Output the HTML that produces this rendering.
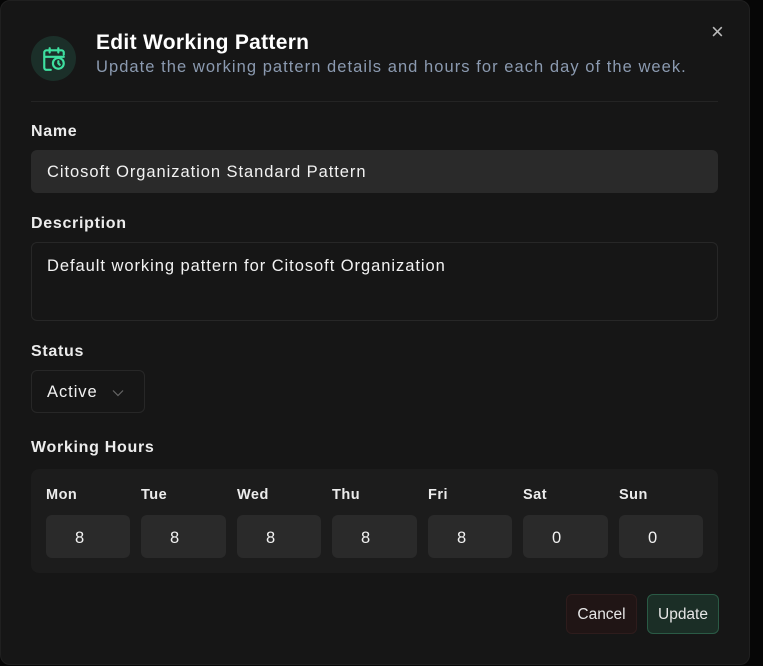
<!DOCTYPE html>
<html><head><style>
*{box-sizing:border-box;margin:0;padding:0}
body{width:763px;height:666px;background:#060606;font-family:"Liberation Sans",sans-serif;color:#f2f2f2;position:relative;overflow:hidden}
.dlg{position:absolute;left:0;top:0;width:750px;height:665px;background:#161616;border:1px solid #202020;border-radius:10px}
.a{position:absolute}
.lbl{font-size:16px;font-weight:bold;color:#ececec;letter-spacing:0.7px}
.in{background:#2a2a2a;border-radius:6px}
.t{font-size:16.5px;letter-spacing:0.95px}
.d{font-size:14.5px;letter-spacing:0.5px}
</style></head><body>
<div class="dlg"></div>
<div class="a" style="left:31px;top:36px;width:45px;height:45px;border-radius:50%;background:#1b2f29"></div>
<svg class="a" style="left:41px;top:46px" width="26" height="26" viewBox="0 0 24 24" fill="none" stroke="#3ee0a0" stroke-width="2" stroke-linecap="round" stroke-linejoin="round"><path d="M8 2v4M16 2v4M3 10h18M21 8V6a2 2 0 0 0-2-2H5a2 2 0 0 0-2 2v14a2 2 0 0 0 2 2h4"/><circle cx="16" cy="16" r="5"/><path d="M16 14v2l1.3 1.3"/></svg>
<div class="a" style="left:96px;top:31px;font-size:21px;font-weight:bold;color:#fff;letter-spacing:0.3px">Edit Working Pattern</div>
<div class="a" style="left:96px;top:58px;font-size:16.5px;color:#8b9ab0;letter-spacing:1.05px">Update the working pattern details and hours for each day of the week.</div>
<div class="a" style="left:711px;top:21px;font-size:22px;color:#bbb;line-height:22px">×</div>
<div class="a" style="left:31px;top:101px;width:687px;height:1px;background:#242424"></div>
<div class="a lbl" style="left:31px;top:123px">Name</div>
<div class="a in" style="left:31px;top:150px;width:687px;height:43px"></div>
<div class="a t" style="left:47px;top:163px">Citosoft Organization Standard Pattern</div>
<div class="a lbl" style="left:31px;top:215px">Description</div>
<div class="a" style="left:31px;top:242px;width:687px;height:79px;border:1px solid #272727;border-radius:6px;background:#161616"></div>
<div class="a t" style="left:47px;top:257px">Default working pattern for Citosoft Organization</div>
<div class="a lbl" style="left:31px;top:343px">Status</div>
<div class="a" style="left:31px;top:370px;width:114px;height:43px;border:1px solid #272727;border-radius:6px"></div>
<div class="a t" style="left:47px;top:383px">Active</div>
<svg class="a" style="left:112px;top:389px" width="12" height="8" viewBox="0 0 12 8"><path d="M1 1.5l5 5 5-5" fill="none" stroke="#666" stroke-width="1.2"/></svg>
<div class="a lbl" style="left:31px;top:439px">Working Hours</div>
<div class="a" style="left:31px;top:469px;width:687px;height:104px;background:#1c1c1c;border-radius:8px"></div>
<div class="a lbl d" style="left:46px;top:487px">Mon</div><div class="a in" style="left:46px;top:515px;width:84px;height:43px"></div><div class="a t" style="left:75px;top:529px">8</div>
<div class="a lbl d" style="left:141px;top:487px">Tue</div><div class="a in" style="left:141px;top:515px;width:85px;height:43px"></div><div class="a t" style="left:170px;top:529px">8</div>
<div class="a lbl d" style="left:237px;top:487px">Wed</div><div class="a in" style="left:237px;top:515px;width:84px;height:43px"></div><div class="a t" style="left:266px;top:529px">8</div>
<div class="a lbl d" style="left:332px;top:487px">Thu</div><div class="a in" style="left:332px;top:515px;width:85px;height:43px"></div><div class="a t" style="left:361px;top:529px">8</div>
<div class="a lbl d" style="left:428px;top:487px">Fri</div><div class="a in" style="left:428px;top:515px;width:84px;height:43px"></div><div class="a t" style="left:457px;top:529px">8</div>
<div class="a lbl d" style="left:523px;top:487px">Sat</div><div class="a in" style="left:523px;top:515px;width:85px;height:43px"></div><div class="a t" style="left:552px;top:529px">0</div>
<div class="a lbl d" style="left:619px;top:487px">Sun</div><div class="a in" style="left:619px;top:515px;width:84px;height:43px"></div><div class="a t" style="left:648px;top:529px">0</div>
<div class="a" style="left:566px;top:594px;width:71px;height:40px;background:#201515;border:1px solid #2e1c1c;border-radius:6px;font-size:15.5px;color:#e6e6e6;text-align:center;line-height:39px">Cancel</div>
<div class="a" style="left:647px;top:594px;width:72px;height:40px;background:#1b2e26;border:1px solid #2a5a45;border-radius:6px;font-size:15.5px;color:#e6e6e6;text-align:center;line-height:39px">Update</div>
</body></html>
